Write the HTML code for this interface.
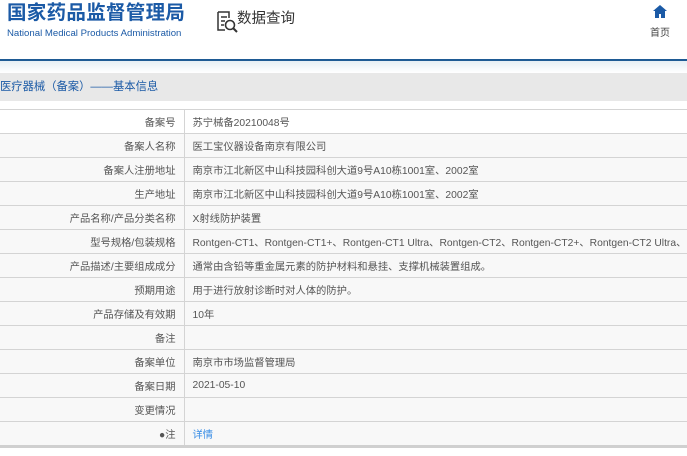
<!DOCTYPE html>
<html><head><meta charset="utf-8"><style>
*{margin:0;padding:0;box-sizing:border-box}
body{width:687px;height:456px;background:#fff;font-family:"Liberation Sans","Noto Sans CJK SC",sans-serif;position:relative;overflow:hidden}
.t1{position:absolute;left:7px;top:1px;font-size:19.5px;font-weight:bold;color:#1b5aa6;letter-spacing:0.3px;line-height:24px}
.t2{position:absolute;left:7px;top:28px;font-size:9.6px;color:#1b5aa6;line-height:11px}
.sq{position:absolute;left:237px;top:9px;font-size:14.5px;color:#333;line-height:20px}
.home{position:absolute;left:650px;top:24px;font-size:10px;color:#444}
.line{position:absolute;left:0;top:59px;width:687px;height:2px;background:#1e5a94}
.hatch{position:absolute;left:0;top:61px;width:687px;height:12px;background:linear-gradient(#e6eef4,#fff)}
.bar{position:absolute;left:0;top:73px;width:687px;height:28px;background:#e8e8e8;font-size:11.3px;color:#1b5aa6;line-height:28px}
table{position:absolute;left:0;top:109px;width:687px;border-collapse:collapse;table-layout:fixed;font-size:10.3px;color:#555}
td{height:24px;border-top:1px solid #d4d4d4;padding:0 8px;white-space:nowrap;overflow:hidden;background:#f8f8f8}
td.l{text-align:right;border-right:1px solid #d4d4d4}
tr:first-child td{background:#fff}
.bot{position:absolute;left:0;top:445px;width:687px;height:3px;background:#d0d0d0}
</style></head><body>
<div class="t1">国家药品监督管理局</div>
<div class="t2">National Medical Products Administration</div>
<svg style="position:absolute;left:216px;top:10px" width="22" height="24" viewBox="0 0 22 24"><path d="M2 2h11v6M2 2v18h7M5 7h6M5 11h4M5 15h3" fill="none" stroke="#333" stroke-width="1.5"/><circle cx="14" cy="15" r="4.5" fill="none" stroke="#333" stroke-width="1.6"/><path d="M17 18l4 4" stroke="#333" stroke-width="2"/></svg>
<div class="sq">数据查询</div>
<svg style="position:absolute;left:653px;top:5px" width="14" height="13" viewBox="0 0 14 13"><path d="M7 0L0 6h2v7h4V9h2v4h4V6h2z" fill="#1b5aa6"/></svg>
<div class="home">首页</div>
<div class="line"></div><div class="hatch"></div>
<div class="bar">医疗器械（备案）——基本信息</div>
<table>
<colgroup><col style="width:184px"><col></colgroup>
<tr><td class="l">备案号</td><td>苏宁械备20210048号</td></tr>
<tr><td class="l">备案人名称</td><td>医工宝仪器设备南京有限公司</td></tr>
<tr><td class="l">备案人注册地址</td><td>南京市江北新区中山科技园科创大道9号A10栋1001室、2002室</td></tr>
<tr><td class="l">生产地址</td><td>南京市江北新区中山科技园科创大道9号A10栋1001室、2002室</td></tr>
<tr><td class="l">产品名称/产品分类名称</td><td>X射线防护装置</td></tr>
<tr><td class="l">型号规格/包装规格</td><td>Rontgen-CT1、Rontgen-CT1+、Rontgen-CT1 Ultra、Rontgen-CT2、Rontgen-CT2+、Rontgen-CT2 Ultra、</td></tr>
<tr><td class="l">产品描述/主要组成成分</td><td>通常由含铅等重金属元素的防护材料和悬挂、支撑机械装置组成。</td></tr>
<tr><td class="l">预期用途</td><td>用于进行放射诊断时对人体的防护。</td></tr>
<tr><td class="l">产品存储及有效期</td><td>10年</td></tr>
<tr><td class="l">备注</td><td></td></tr>
<tr><td class="l">备案单位</td><td>南京市市场监督管理局</td></tr>
<tr><td class="l">备案日期</td><td>2021-05-10</td></tr>
<tr><td class="l">变更情况</td><td></td></tr>
<tr><td class="l">●注</td><td style="color:#3a8ee6">详情</td></tr>
</table>
<div class="bot"></div>
</body></html>
